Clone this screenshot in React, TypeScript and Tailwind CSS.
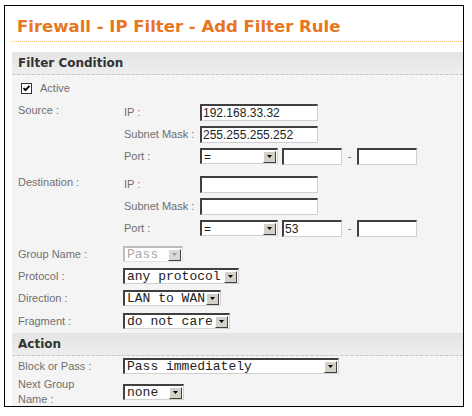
import { ReactNode } from 'react';

const labelFont = { fontFamily: '"Liberation Sans", Arial, sans-serif' };
const monoFont = { fontFamily: '"Liberation Mono", "Courier New", monospace' };

function Arrow({ disabled }: { disabled?: boolean }) {
  return (
    <div
      className={`flex h-[12px] w-[13px] shrink-0 items-center justify-center border border-t-white border-l-white border-r-[#404040] border-b-[#404040] ${
        disabled ? 'bg-[#d8d8d8]' : 'bg-[#d4d0c8]'
      }`}
    >
      <svg width="5" height="3" viewBox="0 0 5 3">
        <path d="M0 0h5L2.5 3z" fill={disabled ? '#9a9a9a' : '#000'} />
      </svg>
    </div>
  );
}

function Select({ value, width, disabled, mono = true }: { value: string; width: number; disabled?: boolean; mono?: boolean }) {
  return (
    <div
      className={`flex h-[16px] items-center justify-between border border-t-2 border-l-2 bg-white pr-[1px] ${
        disabled ? 'border-t-[#bdbdbd] border-l-[#bdbdbd] border-r-[#e0e0e0] border-b-[#e0e0e0]' : 'border-t-[#404040] border-l-[#404040] border-r-[#d0d0d0] border-b-[#d0d0d0]'
      }`}
      style={{ width }}
    >
      <span
        className={`pl-[2px] leading-none whitespace-pre ${mono ? 'text-[13px]' : 'text-[12px]'} ${disabled ? 'text-[#a8a8a8]' : 'text-[#222]'}`}
        style={mono ? monoFont : labelFont}
      >
        {value}
      </span>
      <Arrow disabled={disabled} />
    </div>
  );
}

function Input({ value = '', width }: { value?: string; width: number }) {
  return (
    <div
      className="flex h-[17px] items-center border border-t-2 border-l-2 border-t-[#404040] border-l-[#404040] border-r-[#d0d0d0] border-b-[#d0d0d0] bg-white pl-[1px] text-[12px] leading-none text-[#222]"
      style={{ width, ...labelFont }}
    >
      {value}
    </div>
  );
}

function Row({ label, children, className = '' }: { label: ReactNode; children: ReactNode; className?: string }) {
  return (
    <div className={`flex h-[22px] items-center ${className}`}>
      <div className="w-[105px] shrink-0 text-[11px] text-[#707070]" style={labelFont}>
        {label}
      </div>
      {children}
    </div>
  );
}

function SubRow({ label, children }: { label: string; children: ReactNode }) {
  return (
    <div className="flex h-[22px] items-center">
      <div className="w-[77px] shrink-0 pl-[1px] text-[11px] text-[#707070]" style={labelFont}>
        {label}
      </div>
      {children}
    </div>
  );
}

function PortRow({ from = '' }: { from?: string }) {
  return (
    <SubRow label="Port :">
      <Select value="=" width={78} mono={false} />
      <div className="ml-[4px]">
        <Input width={60} value={from} />
      </div>
      <span className="w-[15px] text-center text-[11px] text-[#707070]" style={labelFont}>
        -
      </span>
      <Input width={60} />
    </SubRow>
  );
}

function AddressBlock({ label, ip = '', mask = '', port = '', className = '' }: { label: string; ip?: string; mask?: string; port?: string; className?: string }) {
  return (
    <div className={`flex ${className}`}>
      <div className="w-[105px] shrink-0 pt-[1px] text-[11px] text-[#707070]" style={labelFont}>
        {label}
      </div>
      <div className="flex flex-col">
        <SubRow label="IP :">
          <Input width={118} value={ip} />
        </SubRow>
        <SubRow label="Subnet Mask :">
          <Input width={118} value={mask} />
        </SubRow>
        <PortRow from={port} />
      </div>
    </div>
  );
}

function SectionHeader({ title }: { title: string }) {
  return (
    <div
      className="flex h-[23px] items-center border-b border-dashed border-[#c8c8c8] bg-gradient-to-b from-[#e4e4e4] to-[#eeeeee] pl-[6px] text-[12px] font-bold text-[#333]"
      style={{ fontFamily: '"DejaVu Sans", Verdana, sans-serif' }}
    >
      {title}
    </div>
  );
}

export default function App() {
  return (
    <div className="h-[416px] w-[472px] overflow-hidden bg-white pt-[5px] pl-[4px]">
      <div className="h-[402px] w-[460px] overflow-hidden border border-black bg-white">
        <div
          className="flex h-[35px] items-end pb-[6px] pl-[12px] text-[16.5px] leading-none font-bold text-[#e8761e]"
          style={{ fontFamily: '"DejaVu Sans", Verdana, sans-serif' }}
        >
          Firewall - IP Filter - Add Filter Rule
        </div>
        <div className="ml-[7px] border-b border-dotted border-[#f2bf7f]" />
        <div className="mt-[10px] ml-[7px] bg-[#f4f4f4]">
          <SectionHeader title="Filter Condition" />
          <div className="pl-[6px]">
            <div className="mt-[2px] flex h-[22px] items-center pl-[3px]">
              <div className="flex h-[11px] w-[11px] items-center justify-center border border-[#333] bg-white">
                <svg width="9" height="9" viewBox="0 0 9 9">
                  <path d="M1.5 4l2 2.2L7.5 1.8" stroke="#000" strokeWidth="1.8" fill="none" />
                </svg>
              </div>
              <span className="ml-[8px] text-[11px] text-[#707070]" style={labelFont}>
                Active
              </span>
            </div>
            <AddressBlock label="Source :" ip="192.168.33.32" mask="255.255.255.252" className="mt-[2px]" />
            <AddressBlock label="Destination :" port="53" className="mt-[6px]" />
            <Row label="Group Name :" className="mt-[4px]">
              <Select value="Pass" width={60} disabled />
            </Row>
            <Row label="Protocol :">
              <Select value="any protocol" width={116} />
            </Row>
            <Row label="Direction :">
              <Select value="LAN to WAN" width={98} />
            </Row>
            <Row label="Fragment :" className="mt-[1px]">
              <Select value="do not care" width={107} />
            </Row>
          </div>
          <div className="mt-[1px]">
            <SectionHeader title="Action" />
          </div>
          <div className="pl-[6px]">
            <Row label="Block or Pass :" className="-mt-[1px]">
              <Select value="Pass immediately" width={216} />
            </Row>
            <div className="flex h-[30px] items-center">
              <div className="w-[105px] shrink-0 text-[11px] leading-[15px] text-[#707070]" style={labelFont}>
                Next Group
                <br />
                Name :
              </div>
              <Select value="none" width={61} />
            </div>
          </div>
        </div>
      </div>
    </div>
  );
}
